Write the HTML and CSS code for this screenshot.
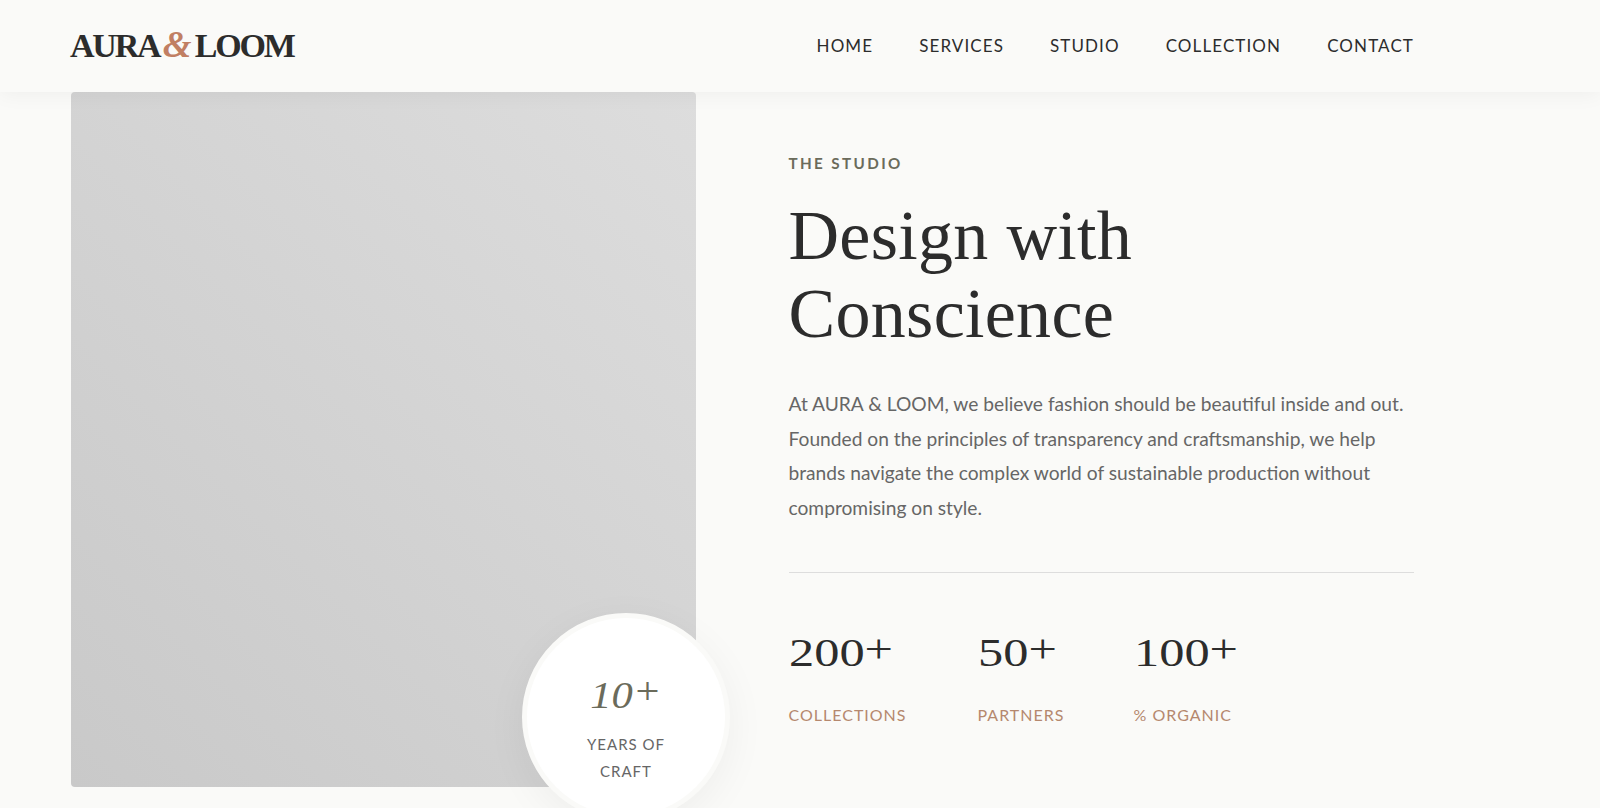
FILE: index.html
```html
<!DOCTYPE html>
<html lang="en">
<head>
  <meta charset="UTF-8">
  <title>AURA &amp; LOOM</title>
  <meta name="viewport" content="width=device-width,initial-scale=1">
  <link rel="stylesheet" href="styles.css">
</head>
<body>
  <header class="site-header">
    <div class="logo">AURA <span class="amp">&amp;</span> LOOM</div>
    <nav class="nav">
      <a href="#">Home</a>
      <a href="#">Services</a>
      <a href="#">Studio</a>
      <a href="#">Collection</a>
      <a href="#">Contact</a>
    </nav>
  </header>

  <main class="studio">
    <div class="photo">
      <div class="badge">
        <div class="badge-num">10<span class="plus">+</span></div>
        <div class="badge-label">Years of<br>Craft</div>
      </div>
    </div>
    <section class="about">
      <div class="eyebrow">The Studio</div>
      <h1>Design with<br>Conscience</h1>
      <p>At AURA &amp; LOOM, we believe fashion should be beautiful inside and out. Founded on the principles of transparency and craftsmanship, we help brands navigate the complex world of sustainable production without compromising on style.</p>
      <div class="stats">
        <div class="stat">
          <div class="stat-num">200<span class="plus">+</span></div>
          <div class="stat-label">Collections</div>
        </div>
        <div class="stat">
          <div class="stat-num">50<span class="plus">+</span></div>
          <div class="stat-label">Partners</div>
        </div>
        <div class="stat">
          <div class="stat-num">100<span class="plus">+</span></div>
          <div class="stat-label">% Organic</div>
        </div>
      </div>
    </section>
  </main>
</body>
</html>
```

FILE: styles.css
```css
*{margin:0;padding:0;box-sizing:border-box}
html,body{height:100%;overflow:hidden}
body{font-family:Lato,sans-serif;color:#2c2c2c;background:#fafaf8}

.site-header{position:relative;z-index:2;height:92px;width:1414px;display:flex;align-items:center;justify-content:space-between;padding-left:70px}
.site-header::after{content:"";position:absolute;left:0;top:0;height:92px;width:1600px;background:#fafaf8;box-shadow:0 2px 20px rgba(0,0,0,0.05);z-index:-1}
.logo{font-family:"Liberation Serif",serif;font-weight:700;font-size:34px;letter-spacing:-2.2px;word-spacing:-1px;color:#2c2c2c}
.logo .amp{font-style:italic;font-size:37px;line-height:0;color:#c17f63}
.nav{display:flex;gap:46px;margin-top:-2px}
.nav a{font-size:17px;letter-spacing:1.1px;text-transform:uppercase;color:#2c2c2c;text-decoration:none}

.studio{display:grid;grid-template-columns:625px 625.5px;column-gap:92.5px;padding-left:71px}
.photo{position:relative;height:695px;border-radius:4px;background:linear-gradient(45deg,#c9c9c9,#dddddd)}
.badge{position:absolute;right:-34px;bottom:-34px;width:208px;height:208px;border-radius:50%;background:#fff;border:5px solid #fafaf8;box-shadow:0 10px 40px rgba(0,0,0,0.05);display:flex;flex-direction:column;align-items:center;justify-content:center;text-align:center;padding-top:18px}
.badge-num{font-family:"Liberation Serif",serif;font-style:italic;font-size:38px;line-height:56px;color:#6b6b5b;margin-bottom:8px;transform:scaleX(1.12)}
.badge-label{font-size:15px;line-height:27px;letter-spacing:1px;text-transform:uppercase;color:#666}

.about{padding-top:61px}
.eyebrow{font-size:15.2px;line-height:20px;font-weight:700;letter-spacing:2.4px;text-transform:uppercase;color:#6b6b5b;margin-bottom:24px}
.about h1{font-family:"Liberation Serif",serif;font-weight:400;font-size:70px;line-height:78px;letter-spacing:0.3px;color:#2c2c2c;margin-bottom:34px}
.about p{font-size:19.2px;line-height:34.6px;color:#666;margin-bottom:47px}
.stats{display:grid;grid-template-columns:189px 156px auto;border-top:1px solid #ddd;padding-top:50px}
.stat-num{font-family:"Liberation Serif",serif;font-size:40px;line-height:60px;color:#2c2c2c;margin-bottom:20px;transform:scaleX(1.26);transform-origin:left}
.plus{vertical-align:4px;line-height:0}
.stat-label{font-size:16px;line-height:24px;letter-spacing:1px;text-transform:uppercase;color:#b5886e}
```
